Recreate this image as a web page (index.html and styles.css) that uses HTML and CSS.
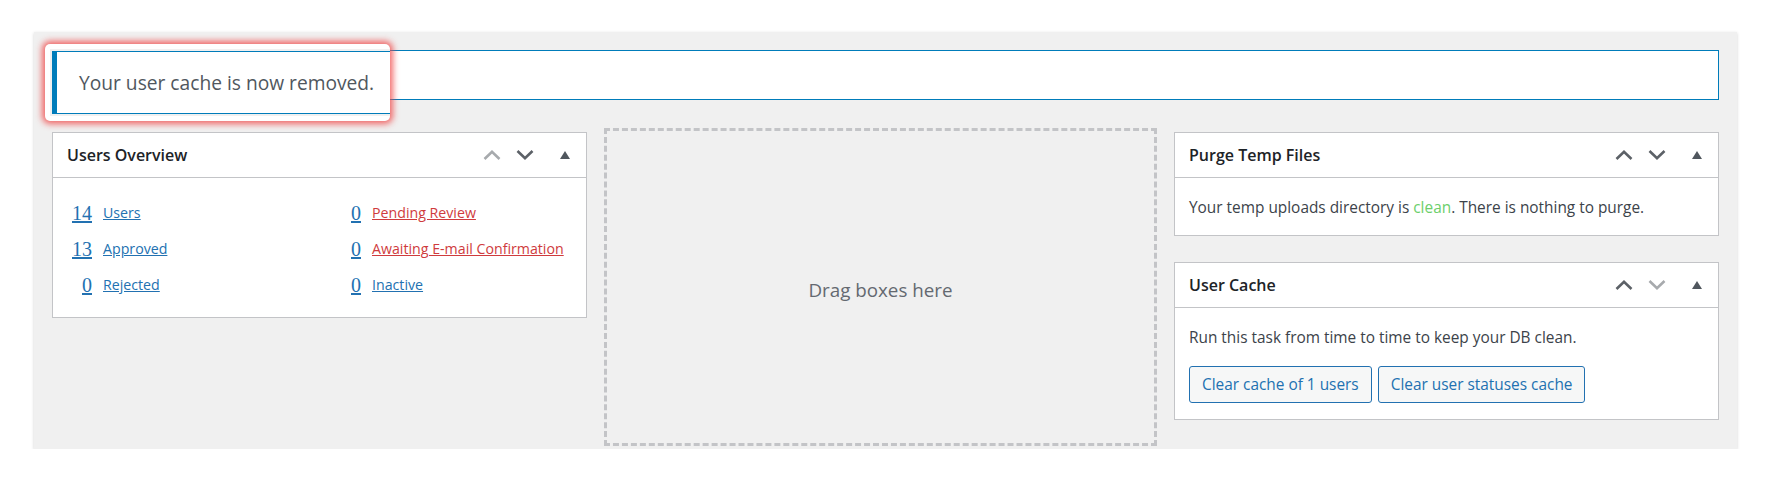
FILE: index.html
```html
<!DOCTYPE html>
<html lang="en">
<head>
    <meta charset="UTF-8">
    <meta name="viewport" content="width=device-width, initial-scale=1.0">
    <title>Dashboard</title>
    <link rel="stylesheet" href="styles.css">
</head>
<body>
    <div class="panel">
        <!-- the message itself is shown in the spotlight copy on top -->
        <div class="notice"></div>

        <div class="widgets">
            <div class="postbox">
                <div class="postbox-header">
                    <h2>Users Overview</h2>
                    <div class="handles">
                        <span class="handle up off"><svg width="18" height="10" viewBox="0 0 18 10"><path d="M1.5 9 9 1.8 16.5 9" fill="none" stroke="currentColor" stroke-width="2.6"/></svg></span>
                        <span class="handle down"><svg width="18" height="10" viewBox="0 0 18 10"><path d="M1.5 1 9 8.2 16.5 1" fill="none" stroke="currentColor" stroke-width="2.6"/></svg></span>
                        <span class="handle toggle"><svg width="10" height="8" viewBox="0 0 10 8"><path d="M5 0 10 8H0z" fill="currentColor"/></svg></span>
                    </div>
                </div>
                <div class="inside overview">
                    <div class="stat"><a class="count" href="#">14</a><a href="#">Users</a></div>
                    <div class="stat"><a class="count" href="#">0</a><a class="warn" href="#">Pending Review</a></div>
                    <div class="stat"><a class="count" href="#">13</a><a href="#">Approved</a></div>
                    <div class="stat"><a class="count" href="#">0</a><a class="warn" href="#">Awaiting E-mail Confirmation</a></div>
                    <div class="stat"><a class="count" href="#">0</a><a href="#">Rejected</a></div>
                    <div class="stat"><a class="count" href="#">0</a><a href="#">Inactive</a></div>
                </div>
            </div>

            <div class="drop-zone">Drag boxes here</div>

            <div class="column">
                <div class="postbox">
                    <div class="postbox-header">
                        <h2>Purge Temp Files</h2>
                        <div class="handles">
                            <span class="handle up"><svg width="18" height="10" viewBox="0 0 18 10"><path d="M1.5 9 9 1.8 16.5 9" fill="none" stroke="currentColor" stroke-width="2.6"/></svg></span>
                            <span class="handle down"><svg width="18" height="10" viewBox="0 0 18 10"><path d="M1.5 1 9 8.2 16.5 1" fill="none" stroke="currentColor" stroke-width="2.6"/></svg></span>
                            <span class="handle toggle"><svg width="10" height="8" viewBox="0 0 10 8"><path d="M5 0 10 8H0z" fill="currentColor"/></svg></span>
                        </div>
                    </div>
                    <div class="inside">
                        <p>Your temp uploads directory is <span class="ok">clean</span>. There is nothing to purge.</p>
                    </div>
                </div>

                <div class="postbox">
                    <div class="postbox-header">
                        <h2>User Cache</h2>
                        <div class="handles">
                            <span class="handle up"><svg width="18" height="10" viewBox="0 0 18 10"><path d="M1.5 9 9 1.8 16.5 9" fill="none" stroke="currentColor" stroke-width="2.6"/></svg></span>
                            <span class="handle down off"><svg width="18" height="10" viewBox="0 0 18 10"><path d="M1.5 1 9 8.2 16.5 1" fill="none" stroke="currentColor" stroke-width="2.6"/></svg></span>
                            <span class="handle toggle"><svg width="10" height="8" viewBox="0 0 10 8"><path d="M5 0 10 8H0z" fill="currentColor"/></svg></span>
                        </div>
                    </div>
                    <div class="inside">
                        <p>Run this task from time to time to keep your DB clean.</p>
                        <div class="actions">
                            <button class="button">Clear cache of 1 users</button>
                            <button class="button">Clear user statuses cache</button>
                        </div>
                    </div>
                </div>
            </div>
        </div>

        <!-- tour highlight over the notice -->
        <div class="spotlight">
            <div class="spotlight-frame">
                <div class="notice-copy">Your user cache is now removed.</div>
            </div>
        </div>
    </div>
</body>
</html>
```

FILE: styles.css
```css
body {
    margin: 0;
    background-color: #fff;
    font-family: "Open Sans", sans-serif;
    font-size: 15.4px;
    color: #3c434a;
}
.panel {
    position: relative;
    box-sizing: border-box;
    width: 1703px;
    height: 417px;
    margin: 32px 0 0 34px;
    padding: 18px 18px 0 18px;
    background-color: #f0f0f0;
    box-shadow: 0 1px 3px rgba(0, 0, 0, 0.18);
}
.notice {
    box-sizing: border-box;
    height: 50px;
    background-color: #fff;
    border: 1px solid #007cba;
    border-left-width: 4px;
}
.widgets {
    display: grid;
    grid-template-columns: 535px 553px 1fr;
    column-gap: 17px;
    align-items: start;
    margin-top: 28px;
}
.postbox {
    background-color: #fff;
    border: 1px solid #c3c4c7;
    margin-top: 4px;
}
.postbox-header {
    display: flex;
    align-items: center;
    height: 44px;
    border-bottom: 1px solid #c3c4c7;
}
.postbox-header h2 {
    flex: 1;
    margin: 0;
    padding-left: 14px;
    font-size: 16px;
    font-weight: 600;
    color: #1d2327;
}
.handles {
    display: flex;
    height: 100%;
}
.handle {
    display: flex;
    align-items: center;
    justify-content: center;
    color: #5c6167;
}
.handle.up {
    width: 30px;
}
.handle.down {
    width: 36px;
}
.handle.toggle {
    width: 43px;
    color: #50575e;
}
.handle.off {
    color: #a7aaad;
}
.inside {
    padding: 19px 14px 16px 14px;
    line-height: 22px;
}
.inside p {
    margin: 0;
}
.overview {
    display: grid;
    grid-template-columns: 269px 1fr;
    padding: 15px 0 16px 13px;
}
.stat {
    display: flex;
    align-items: baseline;
    height: 36px;
    line-height: 36px;
}
.stat a {
    color: #2271b1;
    font-size: 14.2px;
}
.stat a.warn {
    color: #cf3b3d;
}
.stat a.count {
    width: 26px;
    margin-right: 11px;
    text-align: right;
    font-family: "Liberation Serif", serif;
    font-size: 20px;
    text-decoration-thickness: 2px;
    position: relative;
    top: 2px;
}
.drop-zone {
    box-sizing: border-box;
    height: 318px;
    border: 3px dashed #c3c4c7;
    display: flex;
    align-items: center;
    justify-content: center;
    padding-top: 5px;
    font-size: 18.8px;
    color: #646970;
}
.column .postbox + .postbox {
    margin-top: 26px;
}
.ok {
    color: #6ccf6c;
}
.actions {
    display: flex;
    gap: 6px;
    margin-top: 17px;
}
.button {
    height: 37px;
    padding: 0 12px;
    border: 1px solid #2271b1;
    border-radius: 3px;
    background-color: #f6f7f7;
    color: #2271b1;
    font-family: "Open Sans", sans-serif;
    font-size: 15.4px;
    cursor: pointer;
}
.spotlight {
    position: absolute;
    left: 11px;
    top: 12px;
    box-sizing: border-box;
    width: 345px;
    height: 77px;
    padding: 5px 0 5px 5px;
    background-color: #fff;
    border-radius: 5px;
    box-shadow: 0 0 6px 3px rgba(240, 70, 70, 0.8);
}
.spotlight-frame {
    height: 100%;
    box-sizing: border-box;
    padding: 2px 0 2px 2px;
    background-color: #f0f0f0;
    overflow: hidden;
}
.notice-copy {
    box-sizing: border-box;
    width: 420px;
    height: 63px;
    display: flex;
    align-items: center;
    padding-left: 22px;
    background-color: #fff;
    border: 1px solid #007cba;
    border-left-width: 5px;
    font-size: 19.2px;
    color: #50575e;
}
```
